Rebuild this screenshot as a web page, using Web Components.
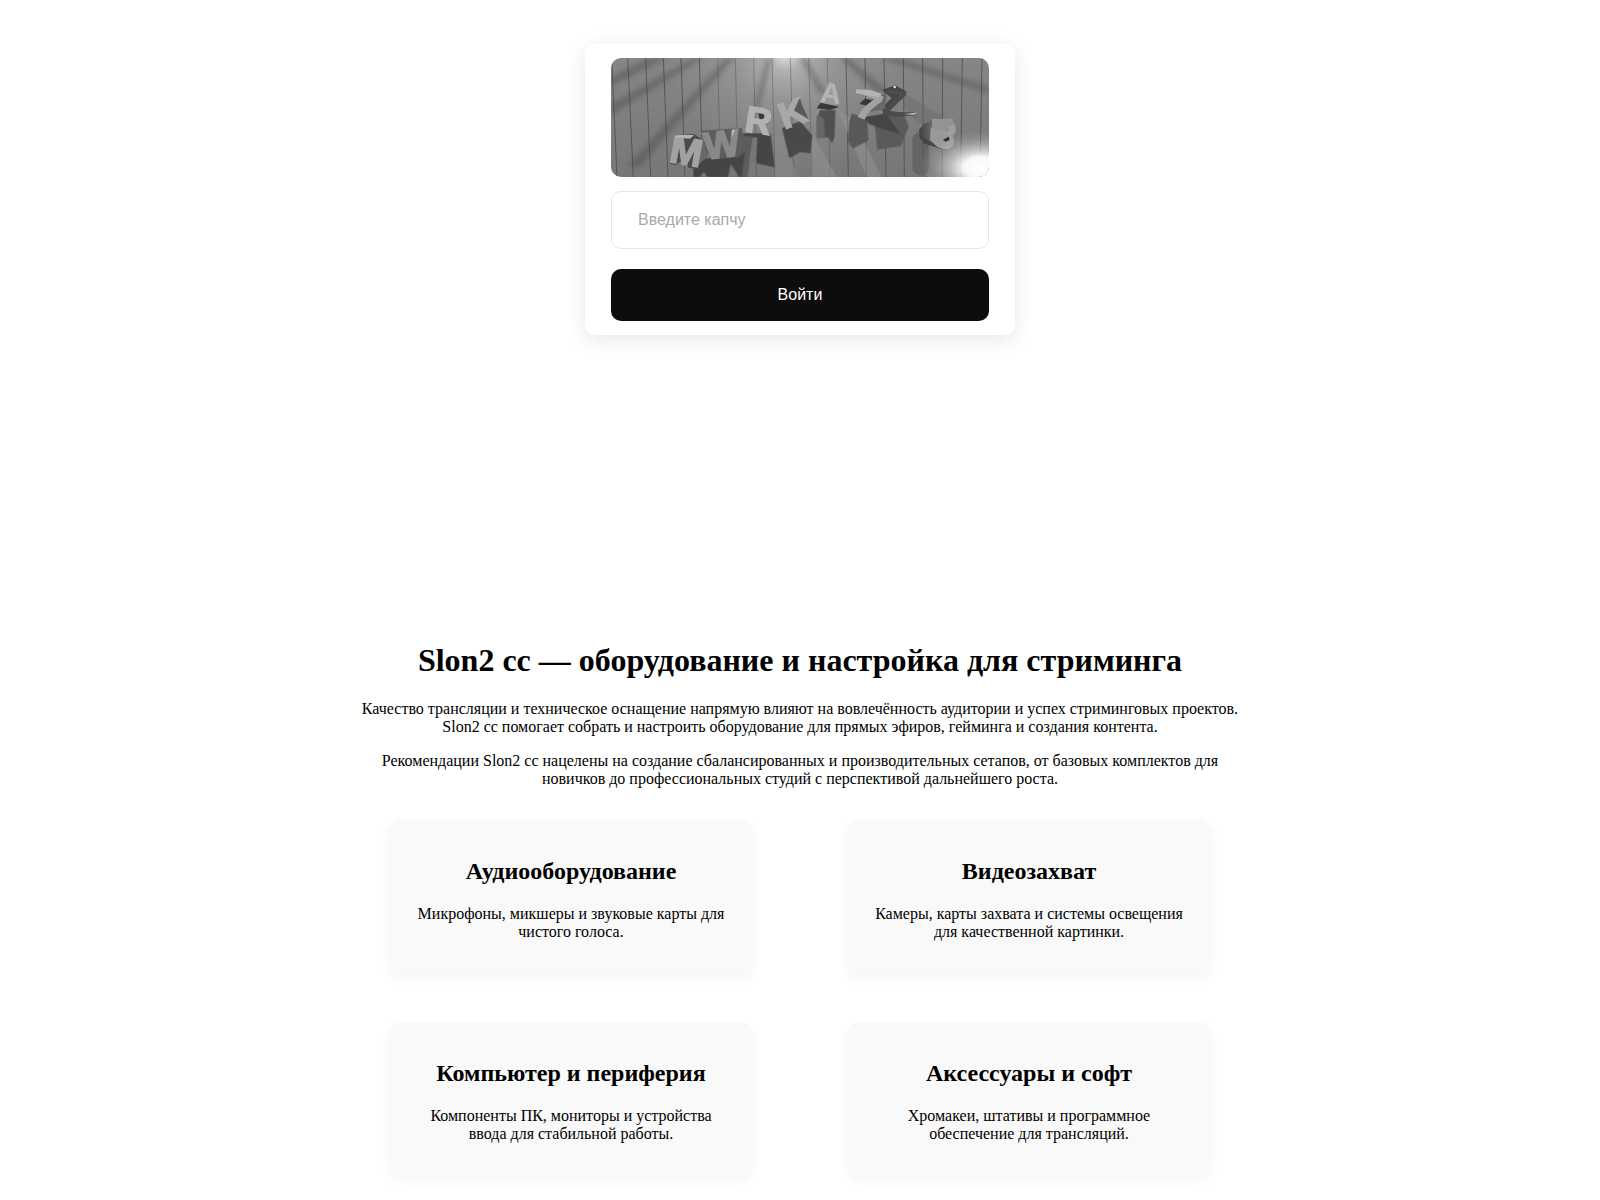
<!DOCTYPE html>
<html lang="ru">
<head>
<meta charset="utf-8">
<meta name="viewport" content="width=device-width, initial-scale=1">
<title>Slon2 cc</title>
<style>
  body { margin: 0; background: #fff; color: #000; font: 16px/18px "Liberation Serif", serif; }
</style>
</head>
<body>
<login-hero></login-hero>
<main>
  <intro-section>
    <span slot="title">Slon2 cc — оборудование и настройка для стриминга</span>
    <p>Качество трансляции и техническое оснащение напрямую влияют на вовлечённость аудитории и успех стриминговых проектов. Slon2 cc помогает собрать и настроить оборудование для прямых эфиров, гейминга и создания контента.</p>
    <p>Рекомендации Slon2 cc нацелены на создание сбалансированных и производительных сетапов, от базовых комплектов для новичков до профессиональных студий с перспективой дальнейшего роста.</p>
    <feature-card slot="cards"><span slot="title">Аудиооборудование</span>Микрофоны, микшеры и звуковые карты для чистого голоса.</feature-card>
    <feature-card slot="cards"><span slot="title">Видеозахват</span>Камеры, карты захвата и системы освещения для качественной картинки.</feature-card>
    <feature-card slot="cards"><span slot="title">Компьютер и периферия</span>Компоненты ПК, мониторы и устройства ввода для стабильной работы.</feature-card>
    <feature-card slot="cards"><span slot="title">Аксессуары и софт</span>Хромакеи, штативы и программное обеспечение для трансляций.</feature-card>
  </intro-section>
</main>

<template id="captcha-tpl">
<style>
  :host { display: block; border-radius: 10px; overflow: hidden; }
  svg { display: block; width: 100%; height: auto; }
  text { font-family: "Liberation Sans", sans-serif; font-weight: bold; text-anchor: middle; }
</style>
<svg viewBox="123 84 1134 357" role="img" aria-label="Капча">
  <defs>
    <linearGradient id="wall" x1="0" x2="0" y1="0" y2="1"><stop offset="0" stop-color="#868686"/><stop offset="1" stop-color="#777"/></linearGradient>
    <radialGradient id="lamp" gradientUnits="userSpaceOnUse" cx="645" cy="70" r="380"><stop offset="0" stop-color="#fff" stop-opacity=".8"/><stop offset=".14" stop-color="#ddd" stop-opacity=".5"/><stop offset=".4" stop-color="#bbb" stop-opacity=".3"/><stop offset="1" stop-color="#999" stop-opacity="0"/></radialGradient>
    <radialGradient id="flare" gradientUnits="userSpaceOnUse" cx="0" cy="0" r="1" gradientTransform="translate(1235 412) scale(190 112)"><stop offset="0" stop-color="#fff"/><stop offset=".28" stop-color="#fff" stop-opacity=".95"/><stop offset=".5" stop-color="#e8e8e8" stop-opacity=".6"/><stop offset=".75" stop-color="#ccc" stop-opacity=".25"/><stop offset="1" stop-color="#aaa" stop-opacity="0"/></radialGradient>
    <linearGradient id="roll" x1="0" x2="1" y1="0" y2="0"><stop offset="0" stop-color="#414141"/><stop offset=".4" stop-color="#6e6e6e"/><stop offset=".6" stop-color="#979797"/><stop offset="1" stop-color="#858585"/></linearGradient>
    <filter id="soft" x="-20%" y="-20%" width="140%" height="140%"><feGaussianBlur stdDeviation="8"/></filter>
    <filter id="edge"><feGaussianBlur stdDeviation="2"/></filter>
  </defs>
  <rect x="123" y="84" width="1134" height="357" fill="url(#wall)"/>
  <rect x="123" y="84" width="1134" height="357" fill="url(#lamp)"/>
  <g filter="url(#soft)" fill="#444" opacity=".38">
    <path d="M235 84H295L123 168V140Z"/>
    <path d="M370 84H400L123 255V222Z"/>
    <path d="M468 84H492L330 270 210 410H170Z"/>
    <path d="M588 84H606L570 225 545 270Z"/>
    <path d="M690 84H708L775 200 745 185Z"/>
    <path d="M810 84H838L950 180 920 190Z"/>
    <path d="M930 84H980L1257 170V190Z"/>
  </g>
  <g stroke="#484848" stroke-width="3" filter="url(#edge)">
    <path d="M125 84 141 441M173 84 190 441M227 84 242 441M280 84 294 441M333 84 345 441M388 84 398 441M828 84 835 441M885 84 889 441M942 84 948 441M1000 84 1003 441M1058 84 1060 441M1118 84 1116 441M1177 84 1172 441M1236 84 1230 441" opacity=".75"/>
    <path d="M443 84 452 441M496 84 504 441M551 84 559 441M606 84 615 441M661 84 671 441M716 84 726 441M772 84 780 441" opacity=".4"/>
  </g>
  <g filter="url(#edge)">
    <path d="M615 290 650 330 680 441H615Z" fill="#8a8a8a" opacity=".6"/>
    <path d="M722 300 800 441H725Z" fill="#999" opacity=".45"/>
    <path d="M800 235 855 275 935 441H890Z" fill="#999" opacity=".45"/>
    <path d="M370 414 405 385 505 380 520 310H602L614 412 560 400 545 340 525 441H508L482 402 474 441H370Z" fill="#454545"/>
    <path d="M520 318 550 320 532 441H514L525 365 500 385Z" fill="#5c5c5c"/>
    <path d="M548 322 562 322 558 400 536 400Z" fill="#777"/>
    <path d="M388 441 402 426 412 441Z" fill="#777"/>
    <path d="M636 294 690 274 727 315 722 370 690 366 658 384Z" fill="#484848"/>
    <path d="M750 240 796 240 794 320 786 341 775 322 741 324 740 270Z" fill="#505050"/>
    <path d="M740 255 762 265 765 322 741 324Z" fill="#666"/>
    <path d="M846 250 892 268 895 332 848 356 833 333 838 275Z" fill="#585858"/>
    <path d="M890 260 1000 248 1016 290 992 348 921 359 915 287Z" fill="#5a5a5a"/>
    <path d="M880 262 948 250 990 312 900 284Z" fill="#454545"/>
    <path d="M1005 190 1085 240 1130 264 1045 282 1000 230Z" fill="#666" opacity=".4"/>
    <rect x="1027" y="306" width="50" height="130" rx="25" fill="#5c5c5c" opacity=".7"/>
  </g>
  <g filter="url(#edge)">
    <path d="M300 401 317 316 372 312 402 332 414 368 377 416 356 414 345 384 318 406Z" fill="#4b4b4b"/>
    <path d="M383 392 400 330 415 378 383 405Z" fill="#686868"/>
    <path d="M392 302 515 294 520 314 503 380 424 388Z" fill="#5d5d5d"/>
    <path d="M562 232 594 254 598 276 582 286 602 318 575 304Z" fill="#393939"/>
    <path d="M655 238 690 204 695 222 718 274 688 270Z" fill="#585858"/>
    <path d="M740 235 753 216 795 218 804 232 780 240Z" fill="#393939"/>
    <path d="M776 154 784 153 804 190 808 208 800 228 750 218Z" fill="#9a9a9a"/>
    <path d="M868 222 885 206 918 212 902 228Z" fill="#353535"/>
    <path d="M936 180 975 166 1008 184 999 202 970 232 944 258 934 235 965 204Z" fill="#444"/>
    <path d="M905 200 950 188 945 238 900 245Z" fill="#686868"/>
    <path d="M940 248 1044 246 1035 256 970 262Z" fill="#4f4f4f"/>
    <path d="M1088 270 1150 264 1156 282 1150 346 1132 359 1088 346 1050 326 1047 300 1060 282Z" fill="url(#roll)"/>
    <path d="M1047 315 1090 340 1132 359 1110 356 1060 340Z" fill="#444"/>
    <g stroke-width="5">
      <text transform="translate(342 404) rotate(10)" font-size="116" fill="#a2a2a2" stroke="#a2a2a2">M</text>
      <text transform="translate(460 382) rotate(-7)" font-size="114" fill="#898989" stroke="#898989">W</text>
      <text transform="translate(560 309) rotate(9)" font-size="109" fill="#b2b2b2" stroke="#b2b2b2">R</text>
      <text transform="translate(680 284) rotate(-20)" font-size="109" fill="#a8a8a8" stroke="#a8a8a8">K</text>
      <text transform="translate(779 219) rotate(7)" font-size="86" fill="#b4b4b4">A</text>
      <text transform="translate(882 266) rotate(22)" font-size="118" fill="#a2a2a2" stroke="#a2a2a2">7</text>
      <text transform="translate(970 257) rotate(8)" font-size="112" fill="#4c4c4c">Z</text>
      <text transform="translate(1118 353) rotate(12)" font-size="112" fill="#9e9e9e" stroke="#9e9e9e">3</text>
    </g>
    <path d="M312 322 326 315 372 315 360 326Z" fill="#b4b4b4"/>
    <path d="M488 300 494 300 484 324Z" fill="#d2d2d2"/>
    <path d="M858 178 905 181 936 192 926 202 858 190Z" fill="#b4b4b4"/>
    <path d="M1086 266 1144 266 1152 284 1110 300 1086 292Z" fill="#949494"/>
    <path d="M1082 292 1120 302 1142 324 1118 340 1145 348 1102 350 1080 330Z" fill="#999"/>
    <path d="M1119 329 1136 320 1139 330 1127 335Z" fill="#242424"/>
    <path d="M1002 253 1044 247 1032 254Z" fill="#c5c5c5"/>
    <circle cx="974" cy="171" r="4" fill="#ddd"/>
  </g>
  <rect x="1000" y="250" width="257" height="191" fill="url(#flare)"/>
</svg>
</template>

<template id="login-tpl">
<style>
  :host { display: flex; justify-content: center; align-items: flex-start; box-sizing: border-box; min-height: 50vh; padding: 44px 16px 0; }
  form { display: flex; flex-direction: column; box-sizing: border-box; width: 100%; max-width: 430px; padding: 14px 26px; border-radius: 10px; background: #fff; box-shadow: 0 4px 20px rgba(0,0,0,.1); }
  input, button { box-sizing: border-box; width: 100%; border-radius: 10px; font: 16px "Liberation Sans", sans-serif; }
  input { height: 58px; margin: 14px 0 20px; padding: 0 26px; border: 1px solid #e8e8e8; background: #fff; color: #111; }
  input::placeholder { color: #a9a9a9; opacity: 1; }
  button { height: 52px; border: 0; background: #0d0d0d; color: #fff; cursor: pointer; }
</style>
<form>
  <captcha-picture></captcha-picture>
  <input type="text" name="captcha" aria-label="Введите капчу" placeholder="Введите капчу" autocomplete="off">
  <button type="button">Войти</button>
</form>
</template>

<template id="intro-tpl">
<style>
  :host { display: block; max-width: 900px; margin: 0 auto; padding: 20px; text-align: center; }
  h1 { margin: 22px 0 21px; font-size: 32px; line-height: 37px; }
  ::slotted(p) { margin: 16px 0; }
  .cards { display: grid; grid-template-columns: repeat(2, minmax(0, 1fr)); gap: 47px 94px; margin-top: 32px; padding: 0 39px; }
  @media (max-width: 700px) { .cards { grid-template-columns: 1fr; padding: 0; } }
</style>
<h1><slot name="title"></slot></h1>
<slot></slot>
<div class="cards"><slot name="cards"></slot></div>
</template>

<template id="card-tpl">
<style>
  :host { display: block; padding: 18px 27px; border-radius: 12px; background: #f9f9f9; box-shadow: 0 4px 12px rgba(0,0,0,.04); }
  h2 { margin: 20px 0; font-size: 24px; line-height: 27px; }
  p { margin: 0 0 16px; }
</style>
<h2><slot name="title"></slot></h2>
<p><slot></slot></p>
</template>

<script>
  const fromTemplate = id => class extends HTMLElement {
    constructor() {
      super();
      this.attachShadow({ mode: "open" }).append(document.getElementById(id).content.cloneNode(true));
    }
  };
  customElements.define("captcha-picture", class extends fromTemplate("captcha-tpl") {});
  customElements.define("login-hero", class extends fromTemplate("login-tpl") {});
  customElements.define("feature-card", class extends fromTemplate("card-tpl") {});
  customElements.define("intro-section", class extends fromTemplate("intro-tpl") {});
</script>
</body>
</html>
